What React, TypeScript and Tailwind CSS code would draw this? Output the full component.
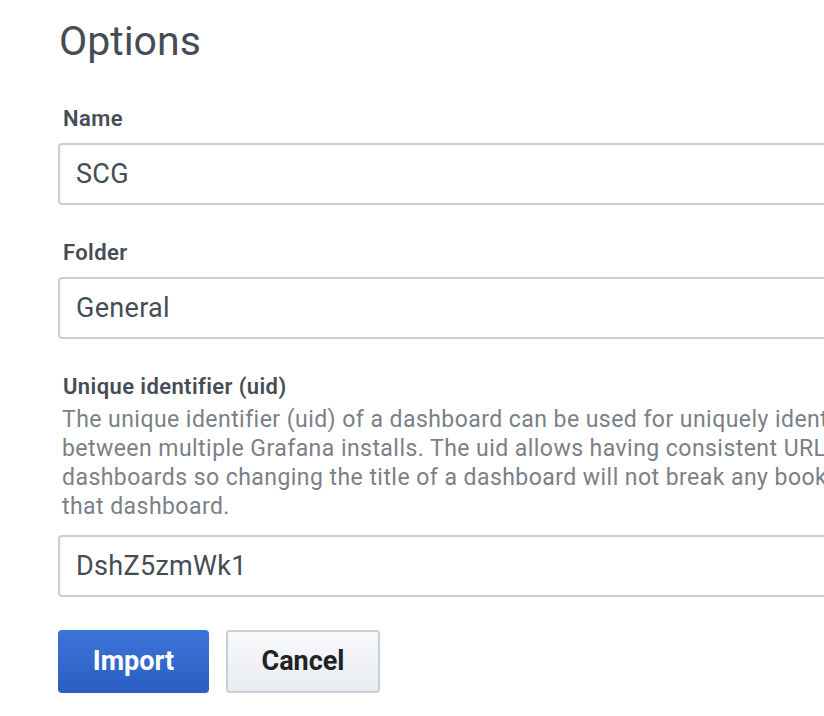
import React from "react";

const descLines = [
  "The unique identifier (uid) of a dashboard can be used for uniquely identifying a dashboard",
  "between multiple Grafana installs. The uid allows having consistent URL's for accessing",
  "dashboards so changing the title of a dashboard will not break any bookmarked links to",
  "that dashboard.",
];

const Label = ({ children }: { children: React.ReactNode }) => (
  <label className="pl-[5px] text-[22px] leading-[24px] font-semibold tracking-[0.4px] text-[#464c54]">
    {children}
  </label>
);

const Input = ({ value, className = "mt-[12px]" }: { value: string; className?: string }) => (
  <div
    className={`${className} flex h-[62px] w-[1000px] items-center rounded-[4px] border-2 border-[#c7d0d9] bg-white pl-[16px] text-[27px] tracking-[0.3px] text-[#464c54]`}
  >
    {value}
  </div>
);

export default function App() {
  return (
    <div className="h-[716px] w-full overflow-hidden bg-white font-['Roboto',sans-serif]">
      <div className="flex flex-col pl-[58px] pt-[17px]">
        <h1 className="pl-[1px] text-[41px] leading-[48px] font-normal text-[#464c54]">Options</h1>

        <div className="mt-[42px] flex flex-col gap-[36px]">
          <div className="flex flex-col">
            <Label>Name</Label>
            <Input value="SCG" />
          </div>
          <div className="flex flex-col">
            <Label>Folder</Label>
            <Input value="General" />
          </div>
          <div className="flex flex-col">
            <Label>Unique identifier (uid)</Label>
            <div className="mt-[6px] pl-[4px] text-[23px] leading-[29px] tracking-[0.45px] text-[#7b8087]">
              {descLines.map((l) => (
                <div key={l} className="whitespace-nowrap">
                  {l}
                </div>
              ))}
            </div>
            <Input value="DshZ5zmWk1" className="mt-[14px]" />
          </div>
        </div>

        <div className="mt-[33px] flex gap-[17px]">
          <button className="h-[63px] w-[151px] rounded-[4px] bg-gradient-to-b from-[#3d74d9] to-[#2a5ec1] text-[27px] font-bold text-white">
            Import
          </button>
          <button className="h-[63px] w-[154px] rounded-[4px] border-2 border-[#c7d0d9] bg-gradient-to-b from-[#f8f9fb] to-[#e9ecf0] text-[27px] font-bold text-[#202226]">
            Cancel
          </button>
        </div>
      </div>
    </div>
  );
}
